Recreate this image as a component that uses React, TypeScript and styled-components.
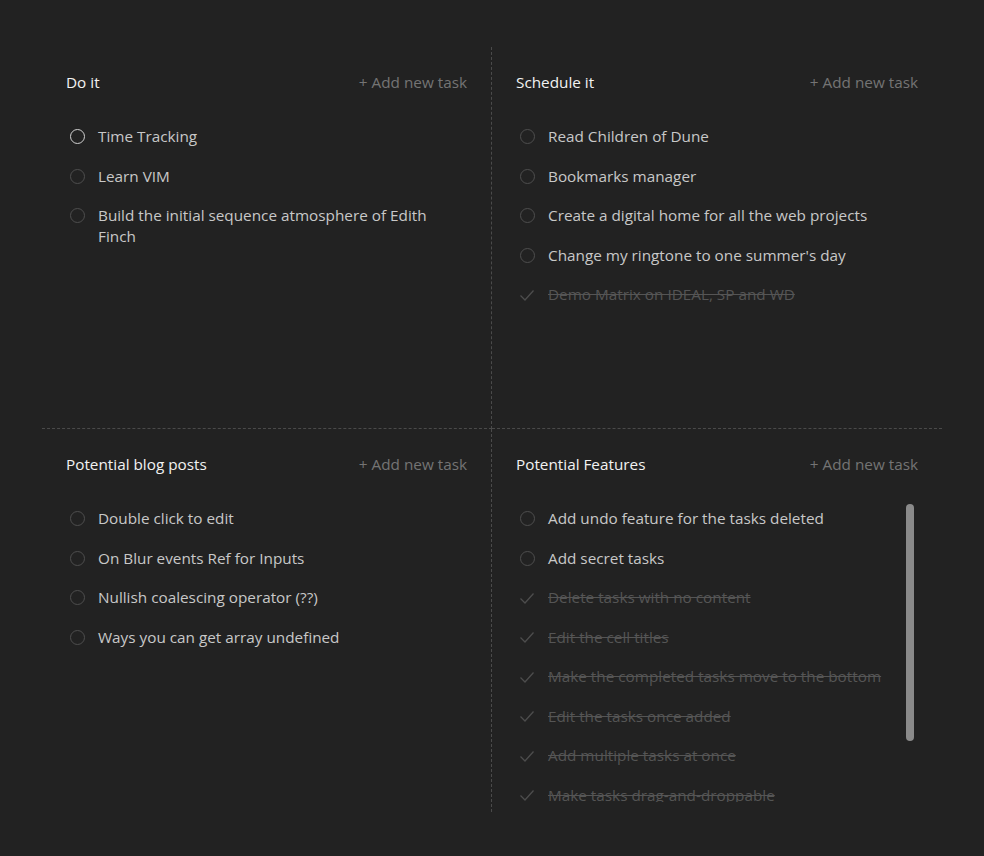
import React from 'react'
import styled, { createGlobalStyle } from 'styled-components'

interface Task {
  id: number
  text: string
  done?: boolean
  active?: boolean
}

interface Quadrant {
  title: string
  tasks: Task[]
  scroll?: boolean
}

const quadrants: Quadrant[] = [
  {
    title: 'Do it',
    tasks: [
      { id: 1, text: 'Time Tracking', active: true },
      { id: 2, text: 'Learn VIM' },
      { id: 3, text: 'Build the initial sequence atmosphere of Edith Finch' },
    ],
  },
  {
    title: 'Schedule it',
    tasks: [
      { id: 4, text: 'Read Children of Dune' },
      { id: 5, text: 'Bookmarks manager' },
      { id: 6, text: 'Create a digital home for all the web projects' },
      { id: 7, text: "Change my ringtone to one summer's day" },
      { id: 8, text: 'Demo Matrix on IDEAL, SP and WD', done: true },
    ],
  },
  {
    title: 'Potential blog posts',
    tasks: [
      { id: 9, text: 'Double click to edit' },
      { id: 10, text: 'On Blur events Ref for Inputs' },
      { id: 11, text: 'Nullish coalescing operator (??)' },
      { id: 12, text: 'Ways you can get array undefined' },
    ],
  },
  {
    title: 'Potential Features',
    scroll: true,
    tasks: [
      { id: 13, text: 'Add undo feature for the tasks deleted' },
      { id: 14, text: 'Add secret tasks' },
      { id: 15, text: 'Delete tasks with no content', done: true },
      { id: 16, text: 'Edit the cell titles', done: true },
      { id: 17, text: 'Make the completed tasks move to the bottom', done: true },
      { id: 18, text: 'Edit the tasks once added', done: true },
      { id: 19, text: 'Add multiple tasks at once', done: true },
      { id: 20, text: 'Make tasks drag-and-droppable', done: true },
    ],
  },
]

function CheckIcon () {
  return (
    <svg width="16" height="16" viewBox="0 0 16 16" fill="none">
      <polyline points="1.5,8.5 6,13 14.5,3.5" stroke="#4d4d4d" strokeWidth="1.3" />
    </svg>
  )
}

function TaskItem ({ task }: { task: Task }) {
  return (
    <Item>
      <Marker>
        { task.done ? <CheckIcon /> : <Circle $active={task.active} /> }
      </Marker>
      <Label $done={task.done}>{ task.text }</Label>
    </Item>
  )
}

export default function App () {
  return (
    <>
      <GlobalStyle />
      <Page>
        <Matrix>
          { quadrants.map((q, i) => (
            <Cell key={q.title} $right={i % 2 === 1} $bottom={i > 1}>
              <Header>
                <Title>{ q.title }</Title>
                <AddTask>+ Add new task</AddTask>
              </Header>
              <ListArea>
                <List $scroll={q.scroll}>
                  { q.tasks.map(task => <TaskItem key={task.id} task={task} />) }
                </List>
                { q.scroll && <ScrollThumb /> }
              </ListArea>
            </Cell>
          )) }
        </Matrix>
      </Page>
    </>
  )
}

const GlobalStyle = createGlobalStyle`
  body {
    margin: 0;
    background: #222222;
    font-family: "Open Sans", "Noto Sans", sans-serif;
  }
`

const Page = styled.div`
  padding: 47px 42px 44px;
`

const Matrix = styled.div`
  display: grid;
  grid-template-columns: 450px 450px;
  grid-template-rows: 382px 383px;
`

const Cell = styled.section<{ $right: boolean; $bottom: boolean }>`
  display: flex;
  flex-direction: column;
  box-sizing: border-box;
  height: ${p => (p.$bottom ? 383 : 382)}px;
  overflow: hidden;
  padding: 25px 24px 10px 24px;
  border-right: ${p => (p.$right ? 'none' : '1px dashed #4a4a4a')};
  border-bottom: ${p => (p.$bottom ? 'none' : '1px dashed #4a4a4a')};
`

const Header = styled.header`
  flex: none;
  display: flex;
  justify-content: space-between;
  align-items: center;
  font-size: 15.3px;
  line-height: 21px;
  margin-bottom: 24px;
`

const Title = styled.h2`
  margin: 0;
  font-size: inherit;
  font-weight: 400;
  color: #f2f2f2;
`

const AddTask = styled.button`
  border: none;
  background: none;
  padding: 0;
  font: inherit;
  color: #747474;
  cursor: pointer;
`

const ListArea = styled.div`
  position: relative;
  flex: 1 1 0;
  min-height: 0;
  margin-right: 4px;
`

const List = styled.ul<{ $scroll?: boolean }>`
  list-style: none;
  margin: 0;
  padding: 0;
  height: 100%;
  overflow-y: ${p => (p.$scroll ? 'auto' : 'hidden')};
  scrollbar-width: none;

  &::-webkit-scrollbar {
    display: none;
  }
`

const ScrollThumb = styled.div`
  position: absolute;
  top: 5px;
  right: 0;
  width: 8px;
  height: 237px;
  border-radius: 4px;
  background: #8a8a8a;
`

const Item = styled.li`
  display: flex;
  align-items: flex-start;
  padding: 9.25px 0;
  font-size: 15.3px;
  line-height: 21px;
`

const Marker = styled.span`
  flex: none;
  width: 16px;
  height: 21px;
  margin: 0 13px 0 3px;
  display: flex;
  align-items: center;
  justify-content: center;
`

const Circle = styled.span<{ $active?: boolean }>`
  box-sizing: border-box;
  width: 15px;
  height: 15px;
  border-radius: 50%;
  border: 1.5px solid ${p => (p.$active ? '#d0d0d0' : '#4e4e4e')};
`

const Label = styled.span<{ $done?: boolean }>`
  color: ${p => (p.$done ? '#555555' : '#c8c8c8')};
  text-decoration: ${p => (p.$done ? 'line-through' : 'none')};
  padding-right: 6px;
`
